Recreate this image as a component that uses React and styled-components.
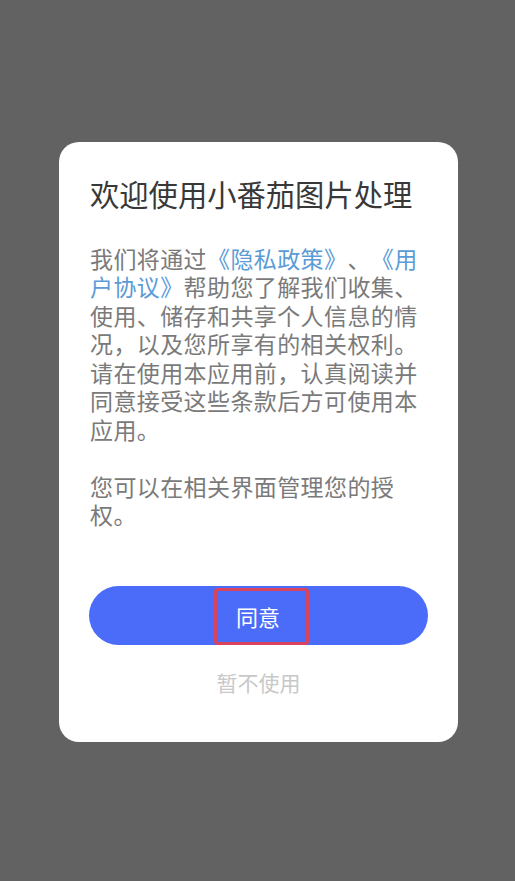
import React from 'react'
import styled, { createGlobalStyle } from 'styled-components'

const GlobalStyle = createGlobalStyle`
  html, body {
    margin: 0;
    padding: 0;
    background: #626262;
  }
  * {
    box-sizing: border-box;
  }
`

const Screen = styled.div`
  min-height: 100vh;
  display: flex;
  align-items: center;
  justify-content: center;
  font-family: "Noto Sans CJK SC", "Noto Sans", sans-serif;
  text-spacing-trim: space-all;
`

const Card = styled.div`
  width: 399px;
  margin: 2px 0 0 2px;
  background: #ffffff;
  border-radius: 20px;
  padding: 32px 30px 45px;
  display: flex;
  flex-direction: column;
`

const Title = styled.h1`
  margin: 0 0 0 1px;
  font-size: 29.3px;
  line-height: 38px;
  font-weight: 400;
  color: #383838;
`

const Body = styled.div`
  margin: 32px 0 0 1px;
  font-size: 23px;
  letter-spacing: 0.4px;
  line-height: 28.5px;
  color: #7a7a7a;
`

const Para = styled.p`
  margin: 0;
  & + & {
    margin-top: 28.5px;
  }
`

const Link = styled.span`
  color: #5b9bd6;
`

const AgreeButton = styled.button`
  margin-top: 57px;
  width: 100%;
  height: 59px;
  border: none;
  border-radius: 30px;
  background: #4a6cf8;
  display: flex;
  align-items: center;
  justify-content: center;
  padding: 0;
  cursor: pointer;
  font-family: inherit;
`

const AgreeLabel = styled.span`
  width: 95px;
  height: 57px;
  margin: 2px 0 0 6px;
  padding-right: 7px;
  border: 3px solid #d9435c;
  border-radius: 4px;
  display: flex;
  align-items: center;
  justify-content: center;
  color: #ffffff;
  font-size: 22px;
`

const Decline = styled.div`
  margin-top: 22px;
  text-align: center;
  font-size: 21px;
  line-height: 30px;
  color: #c8c8c8;
`

export default function App() {
  return (
    <>
      <GlobalStyle />
      <Screen>
        <Card>
          <Title>欢迎使用小番茄图片处理</Title>
          <Body>
            <Para>
              我们将通过<Link>《隐私政策》</Link>、<Link>《用户协议》</Link>帮助您了解我们收集、使用、储存和共享个人信息的情况，以及您所享有的相关权利。请在使用本应用前，认真阅读并同意接受这些条款后方可使用本应用。
            </Para>
            <Para>您可以在相关界面管理您的授权。</Para>
          </Body>
          <AgreeButton>
            <AgreeLabel>同意</AgreeLabel>
          </AgreeButton>
          <Decline>暂不使用</Decline>
        </Card>
      </Screen>
    </>
  )
}
